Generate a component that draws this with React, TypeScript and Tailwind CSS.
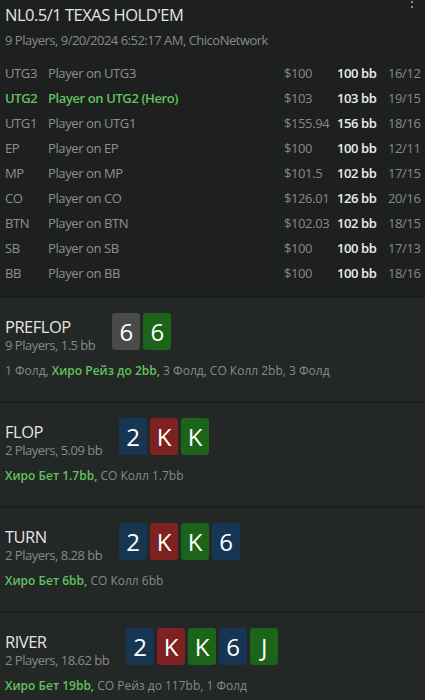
import React from 'react'

type Player = {
  pos: string
  name: string
  stack: string
  bb: string
  stats: string
  hero?: boolean
}

type Card = { rank: string; color: 'gray' | 'green' | 'blue' | 'red' }

type Street = {
  title: string
  info: string
  cards: Card[]
  hero: string
  rest: string
  lead?: string
}

const PLAYERS: Player[] = [
  { pos: 'UTG3', name: 'Player on UTG3', stack: '$100', bb: '100 bb', stats: '16/12' },
  { pos: 'UTG2', name: 'Player on UTG2 (Hero)', stack: '$103', bb: '103 bb', stats: '19/15', hero: true },
  { pos: 'UTG1', name: 'Player on UTG1', stack: '$155.94', bb: '156 bb', stats: '18/16' },
  { pos: 'EP', name: 'Player on EP', stack: '$100', bb: '100 bb', stats: '12/11' },
  { pos: 'MP', name: 'Player on MP', stack: '$101.5', bb: '102 bb', stats: '17/15' },
  { pos: 'CO', name: 'Player on CO', stack: '$126.01', bb: '126 bb', stats: '20/16' },
  { pos: 'BTN', name: 'Player on BTN', stack: '$102.03', bb: '102 bb', stats: '18/15' },
  { pos: 'SB', name: 'Player on SB', stack: '$100', bb: '100 bb', stats: '17/13' },
  { pos: 'BB', name: 'Player on BB', stack: '$100', bb: '100 bb', stats: '18/16' },
]

const STREETS: Street[] = [
  {
    title: 'PREFLOP',
    info: '9 Players, 1.5 bb',
    cards: [
      { rank: '6', color: 'gray' },
      { rank: '6', color: 'green' },
    ],
    lead: '1 Фолд, ',
    hero: 'Хиро Рейз до 2bb,',
    rest: ' 3 Фолд, CO Колл 2bb, 3 Фолд',
  },
  {
    title: 'FLOP',
    info: '2 Players, 5.09 bb',
    cards: [
      { rank: '2', color: 'blue' },
      { rank: 'K', color: 'red' },
      { rank: 'K', color: 'green' },
    ],
    hero: 'Хиро Бет 1.7bb,',
    rest: ' CO Колл 1.7bb',
  },
  {
    title: 'TURN',
    info: '2 Players, 8.28 bb',
    cards: [
      { rank: '2', color: 'blue' },
      { rank: 'K', color: 'red' },
      { rank: 'K', color: 'green' },
      { rank: '6', color: 'blue' },
    ],
    hero: 'Хиро Бет 6bb,',
    rest: ' CO Колл 6bb',
  },
  {
    title: 'RIVER',
    info: '2 Players, 18.62 bb',
    cards: [
      { rank: '2', color: 'blue' },
      { rank: 'K', color: 'red' },
      { rank: 'K', color: 'green' },
      { rank: '6', color: 'blue' },
      { rank: 'J', color: 'green' },
    ],
    hero: 'Хиро Бет 19bb,',
    rest: ' CO Рейз до 117bb, 1 Фолд',
  },
]

const CARD_BG: Record<Card['color'], string> = {
  gray: 'bg-[#4a4a4a]',
  green: 'bg-[#1b6419]',
  blue: 'bg-[#173654]',
  red: 'bg-[#7e2121]',
}

function PlayerRow({ player }: { player: Player }) {
  const tone = player.hero ? 'text-[#62c25e] font-semibold' : 'text-[#8d908e]'
  return (
    <div className="grid h-[25px] grid-cols-[43px_236px_53px_51px_1fr] items-center whitespace-nowrap text-[13px] tracking-[-0.4px]">
      <span className={tone}>{player.pos}</span>
      <span className={tone}>{player.name}</span>
      <span className="text-[#868a88]">{player.stack}</span>
      <span className="font-semibold text-[#ececec]">{player.bb}</span>
      <span className="text-[#868a88]">{player.stats}</span>
    </div>
  )
}

function StreetBlock({ street }: { street: Street }) {
  return (
    <div className="border-t-2 border-[#1a1d1c] bg-[#232725] px-[5px] pt-[15px] pb-[22px]">
      <div className="flex items-end gap-[17px]">
        <div className="mb-[-4px] flex flex-col whitespace-nowrap">
          <span className="text-[16.5px] leading-[20px] tracking-[-0.5px] text-[#e4e4e4]">{street.title}</span>
          <span className="text-[13px] leading-[17px] tracking-[-0.5px] text-[#868a88]">{street.info}</span>
        </div>
        <div className="flex gap-[3px]">
          {street.cards.map((card, i) => (
            <div
              key={i}
              className={`flex h-[37px] w-[28px] items-center justify-center rounded-[3px] text-[24px] leading-none text-white ${CARD_BG[card.color]}`}
            >
              {card.rank}
            </div>
          ))}
        </div>
      </div>
      <div className="mt-[13px] whitespace-nowrap text-[12px] leading-[16px] text-[#868a88]">
        {street.lead}
        <span className="font-semibold text-[#62c25e]">{street.hero}</span>
        {street.rest}
      </div>
    </div>
  )
}

export default function App() {
  return (
    <div className="h-[700px] w-[425px] overflow-hidden bg-[#1d201f] font-['Open_Sans',sans-serif]">
      <div className="relative px-[5px] pt-[5px] pb-[10px]">
        <div className="absolute top-[1px] right-[12px] flex flex-col gap-[3px]">
          <span className="h-[2px] w-[2px] bg-[#8b8f8d]" />
          <span className="h-[2px] w-[2px] bg-[#8b8f8d]" />
        </div>
        <div className="text-[16.5px] leading-[20px] tracking-[-0.5px] text-[#e4e4e4]">NL0.5/1 TEXAS HOLD'EM</div>
        <div className="mt-[7px] text-[13px] leading-[17px] tracking-[-0.5px] text-[#868a88]">
          9 Players, 9/20/2024 6:52:17 AM, ChicoNetwork
        </div>
        <div className="mt-[12px]">
          {PLAYERS.map((p) => (
            <PlayerRow key={p.pos} player={p} />
          ))}
        </div>
      </div>
      {STREETS.map((s) => (
        <StreetBlock key={s.title} street={s} />
      ))}
    </div>
  )
}
